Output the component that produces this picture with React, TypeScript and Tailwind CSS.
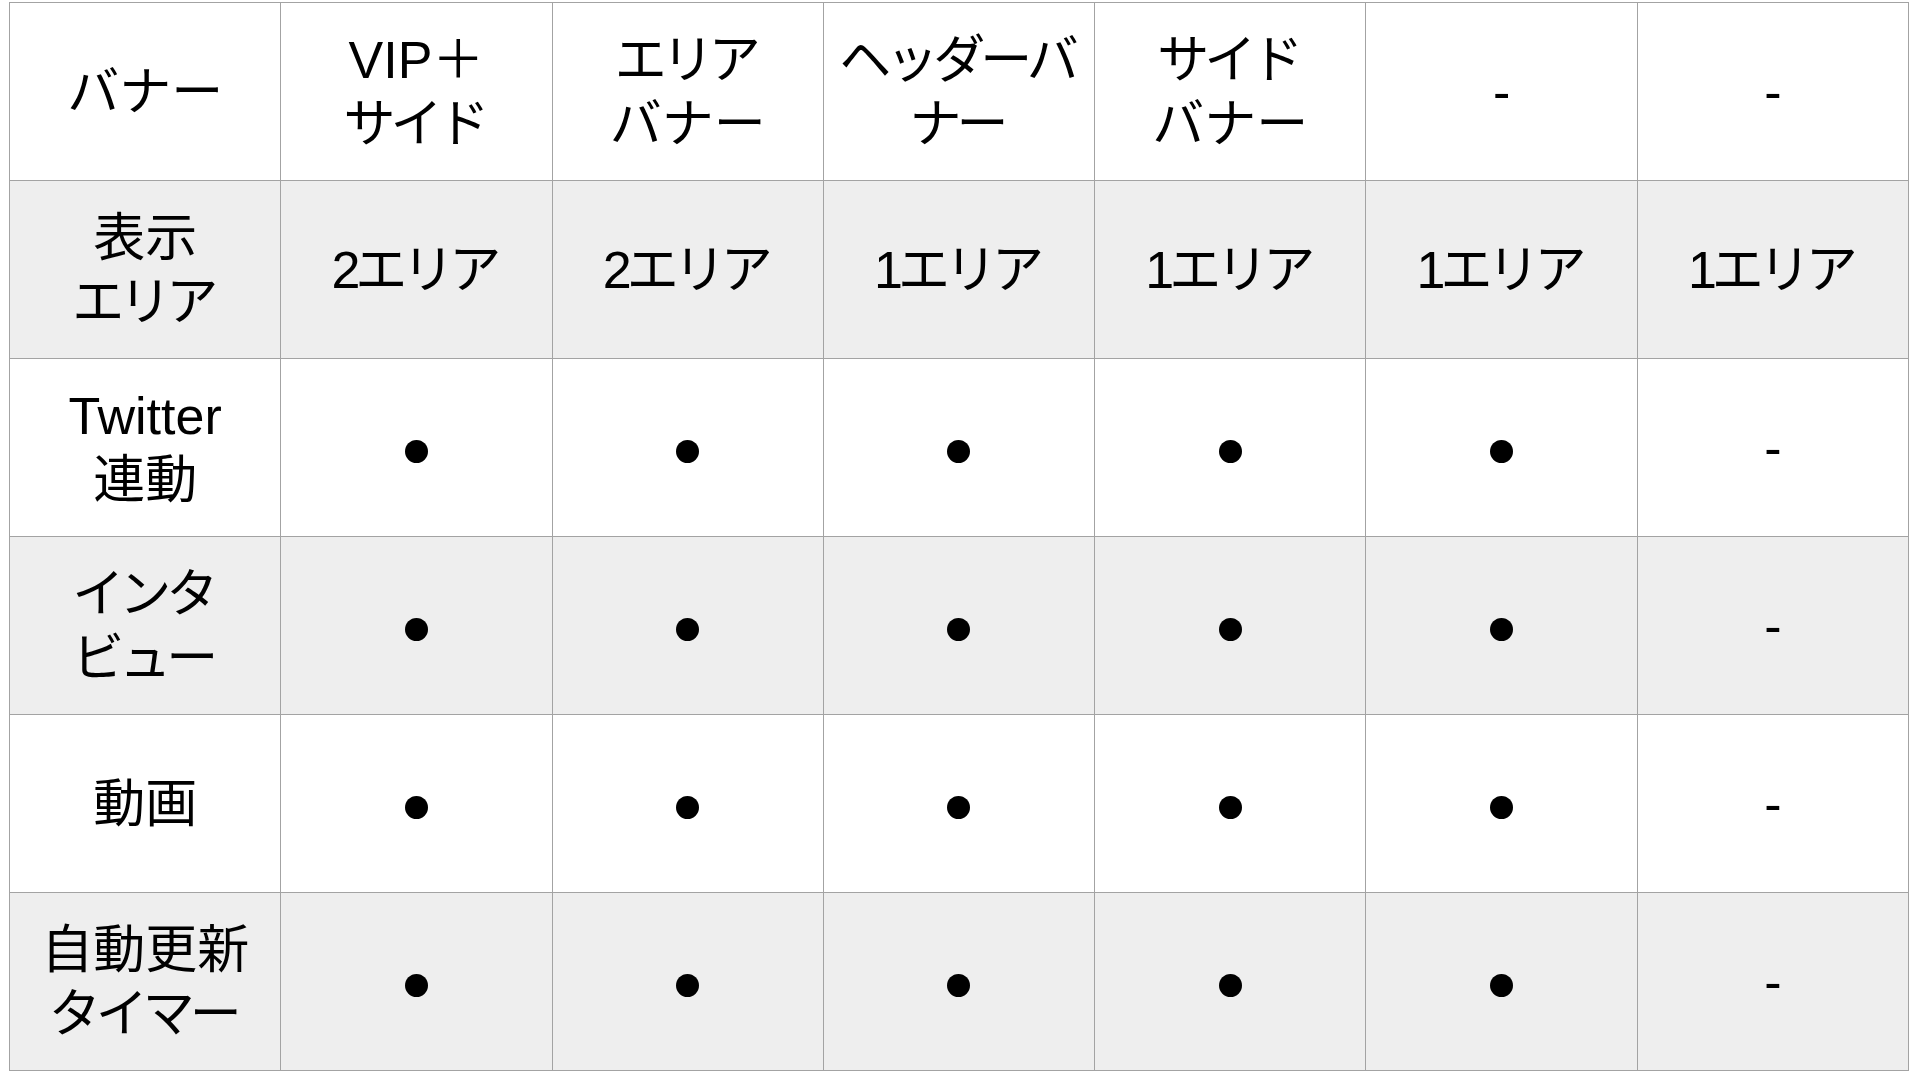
const columns: string[][] = [
  ["バナー"],
  ["VIP＋", "サイド"],
  ["エリア", "バナー"],
  ["ヘッダーバ", "ナー"],
  ["サイド", "バナー"],
  ["-"],
  ["-"],
];

const rows: { label: string[]; cells: string[] }[] = [
  { label: ["表示", "エリア"], cells: ["2エリア", "2エリア", "1エリア", "1エリア", "1エリア", "1エリア"] },
  { label: ["Twitter", "連動"], cells: ["●", "●", "●", "●", "●", "-"] },
  { label: ["インタ", "ビュー"], cells: ["●", "●", "●", "●", "●", "-"] },
  { label: ["動画"], cells: ["●", "●", "●", "●", "●", "-"] },
  { label: ["自動更新", "タイマー"], cells: ["●", "●", "●", "●", "●", "-"] },
];

const tight = (text: string) =>
  /[\u30A0-\u30FF]/.test(text) && text !== "バナー" ? "block tracking-[-5px] pr-[5px]" : "block";

function Lines({ lines }: { lines: string[] }) {
  return (
    <>
      {lines.map((line, i) => (
        <span key={i} className={tight(line)}>
          {line}
        </span>
      ))}
    </>
  );
}

function Cell({ value }: { value: string }) {
  if (value === "●") {
    return <span className="mx-auto mt-[8px] block h-[23px] w-[23px] rounded-full bg-black" aria-label="●" />;
  }
  return <span className={tight(value)}>{value}</span>;
}

export default function App() {
  return (
    <div className="min-h-screen bg-white pl-[9px] pt-[2px] font-['Liberation_Sans','Noto_Sans_CJK_JP',sans-serif] text-black">
      <table className="w-[1900px] table-fixed border-collapse text-center text-[52px] leading-[64px]">
        <tbody>
          <tr className="h-[178px] bg-white">
            {columns.map((lines, i) => (
              <td key={i} className="border border-[#a3a3a3] p-0 align-middle">
                <Lines lines={lines} />
              </td>
            ))}
          </tr>
          {rows.map((row, r) => (
            <tr key={r} className={r % 2 === 0 ? "h-[178px] bg-[#eeeeee]" : "h-[178px] bg-white"}>
              <td className="border border-[#a3a3a3] p-0 align-middle">
                <Lines lines={row.label} />
              </td>
              {row.cells.map((value, c) => (
                <td key={c} className="border border-[#a3a3a3] p-0 align-middle">
                  <Cell value={value} />
                </td>
              ))}
            </tr>
          ))}
        </tbody>
      </table>
    </div>
  );
}
